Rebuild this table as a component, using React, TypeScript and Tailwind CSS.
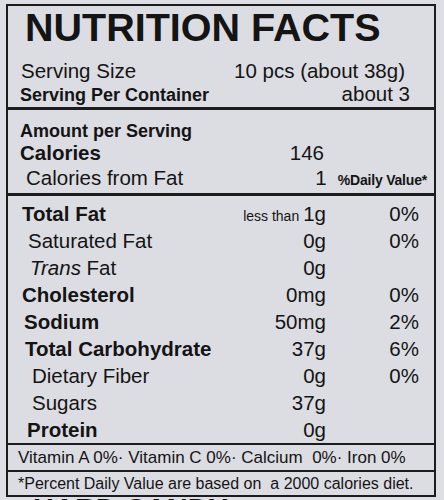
import React from 'react';

type Row = {
  name: React.ReactNode;
  value: React.ReactNode;
  dv?: string;
  bold?: boolean;
  pad: string;
};

const rows: Row[] = [
  {
    name: 'Total Fat',
    value: (
      <>
        <span className="mr-[4px] text-[14px]">less than</span>1g
      </>
    ),
    dv: '0%',
    bold: true,
    pad: 'pl-[14px]',
  },
  { name: 'Saturated Fat', value: '0g', dv: '0%', pad: 'pl-[20px]' },
  {
    name: (
      <>
        <i>Trans</i> Fat
      </>
    ),
    value: '0g',
    pad: 'pl-[22px]',
  },
  { name: 'Cholesterol', value: '0mg', dv: '0%', bold: true, pad: 'pl-[14px]' },
  { name: 'Sodium', value: '50mg', dv: '2%', bold: true, pad: 'pl-[16px]' },
  { name: 'Total Carbohydrate', value: '37g', dv: '6%', bold: true, pad: 'pl-[17px]' },
  { name: 'Dietary Fiber', value: '0g', dv: '0%', pad: 'pl-[24px]' },
  { name: 'Sugars', value: '37g', pad: 'pl-[24px]' },
  { name: 'Protein', value: '0g', bold: true, pad: 'pl-[19px]' },
];

const NutrientRow: React.FC<{ row: Row }> = ({ row }) => (
  <div className={`flex h-[27px] items-baseline pr-[15px] text-[20.5px] leading-[27px] ${row.pad}`}>
    <span className={`flex-1 ${row.bold ? 'font-bold' : ''}`}>{row.name}</span>
    <span className="text-right">{row.value}</span>
    <span className="w-[93px] text-right">{row.dv}</span>
  </div>
);

export default function App() {
  return (
    <div
      className="h-[500px] w-[444px] overflow-hidden bg-[#dedfe4] pl-[6px] pt-[4px] text-[#141414]"
      style={{ fontFamily: '"Liberation Sans", Arial, sans-serif' }}
    >
      <div className="w-[430px] border-2 border-[#1c1c1c] bg-[#dcdde2]">
        {/* serving info */}
        <div className="border-b-[3px] border-[#1c1c1c] pb-[2px] pt-[2px]">
          <h1 className="pl-[17px] text-[39.5px] font-bold leading-[39px]">NUTRITION FACTS</h1>
          <div className="mt-[12px] flex items-baseline justify-between pl-[13px] pr-[29px] text-[20.5px] leading-[24px]">
            <span>Serving Size</span>
            <span>10 pcs (about 38g)</span>
          </div>
          <div className="flex h-[22px] items-baseline justify-between pl-[12px] pr-[24px] leading-[22px]">
            <span className="text-[18px] font-bold">Serving Per Container</span>
            <span className="text-[20.5px]">about 3</span>
          </div>
        </div>

        {/* calories */}
        <div className="border-b-[3px] border-[#1c1c1c] pb-[1px] pt-[10px]">
          <div className="pl-[12px] text-[18px] font-bold leading-[22px]">Amount per Serving</div>
          <div className="flex items-baseline pl-[12px] pr-[110px] text-[20.5px] leading-[22px]">
            <span className="flex-1 font-bold">Calories</span>
            <span>146</span>
          </div>
          <div className="mt-[2px] flex items-baseline pl-[18px] pr-[7px] leading-[24px]">
            <span className="flex-1 text-[20.5px]">Calories from Fat</span>
            <span className="text-[20.5px]">1</span>
            <span className="ml-[11px] text-[14px] font-semibold tracking-[-0.2px]">%Daily Value*</span>
          </div>
        </div>

        {/* nutrients */}
        <div className="border-b-2 border-[#1c1c1c] pt-[4px]">
          {rows.map((row, i) => (
            <NutrientRow key={i} row={row} />
          ))}
        </div>

        <div className="whitespace-pre border-b-2 border-[#1c1c1c] pl-[10px] text-[17px] leading-[25px]">
          Vitamin A 0%· Vitamin C 0%· Calcium  0%· Iron 0%
        </div>

        <div className="whitespace-pre pl-[10px] text-[16px] leading-[23px]">
          *Percent Daily Value are based on  a 2000 calories diet.
        </div>
      </div>

      <div className="-mt-[2px] pl-[27px] text-[29px] font-bold leading-[29px]">HARD CANDY</div>
    </div>
  );
}
